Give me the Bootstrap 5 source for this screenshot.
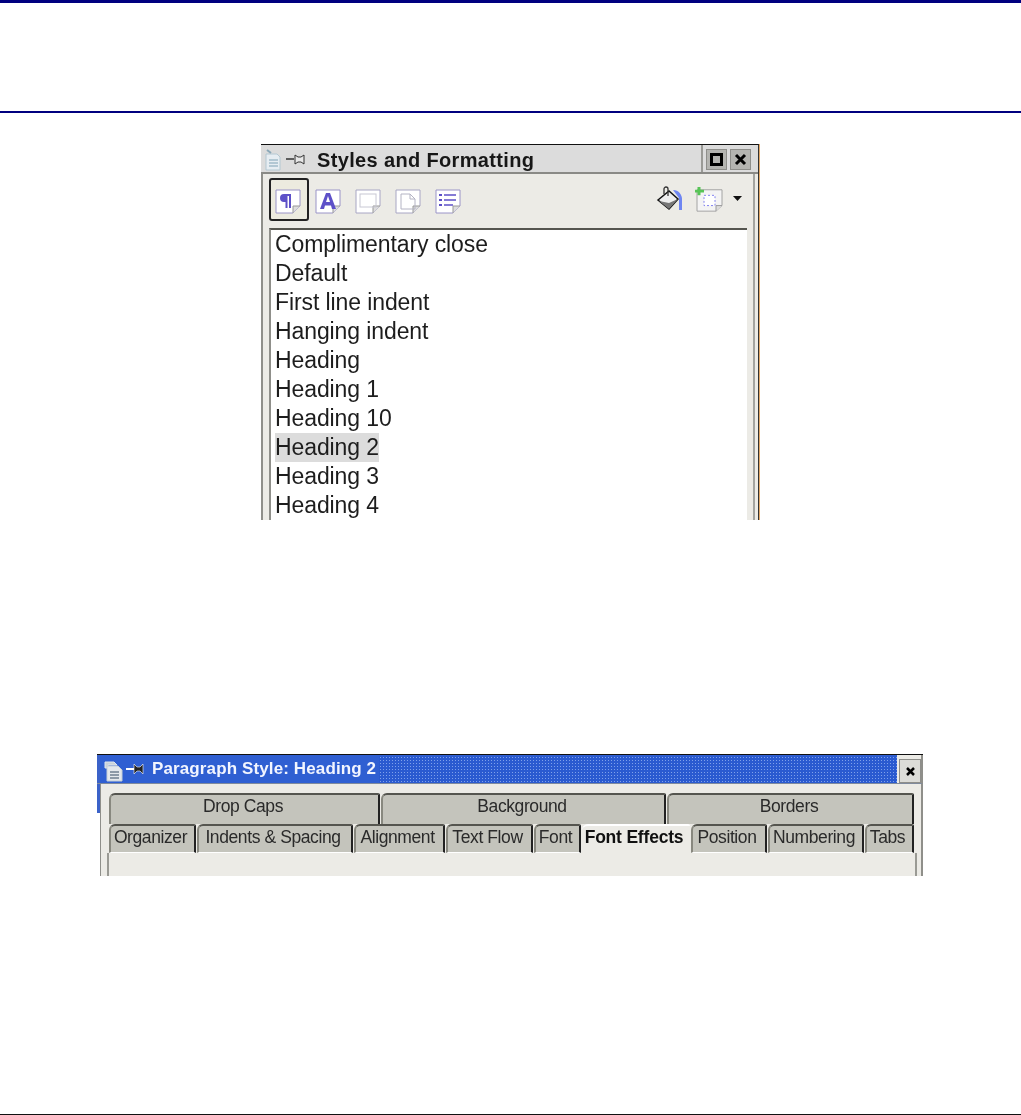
<!DOCTYPE html>
<html lang="en"><head><meta charset="utf-8"><title>Styles</title>
<link href="https://cdn.jsdelivr.net/npm/bootstrap@5.3.0/dist/css/bootstrap.min.css" rel="stylesheet">
<style>
html,body{margin:0;background:#fff;font-family:"Liberation Sans",Arial,sans-serif}
.pg{height:1115px;overflow:hidden}
.rule-a{height:3px;background:#00007f}
.rule-b{height:2px;background:#00007f;margin-top:108px}
.rule-z{height:1px;background:#111;margin-top:auto}
.shot{filter:blur(.45px)}
.win1{width:498px;height:376px;margin:31px 0 0 261px;border-top:1px solid #111;border-right:1px solid #333;box-shadow:1px 0 0 #e2a868;overflow:hidden;background:#ecebe6}
.t1{height:29px;background:#dcdcdc;border-bottom:2px solid #8a8a86;padding-left:3px}
.t1 .ttl{font-weight:700;font-size:20px;letter-spacing:.35px;color:#171717;margin-left:12px;line-height:31px}
.btns{margin-left:auto;border-left:2px solid #9a9a96;height:27px;padding:4px 7px 0 3px;gap:3px}
.wb{width:21px;height:21px;background:#b4b4b0;border:1px solid #8e8e8a;color:#000;align-items:center;justify-content:center}
.body1{border-left:2px solid #8f8f8a;border-right:2px solid #a4a4a0;margin-right:3px;height:346px}
.tool{height:54px;padding:4px 0 0 6px}
.tbb{width:40px;height:43px;border-radius:3px;align-items:center;justify-content:center}
.tbb.on{border:2px solid #222;background:#ecebdf}
.tbb svg{display:block;margin:4px 2px 0 0}
.tright{margin-left:auto;align-items:flex-start}
.ic-a{margin:8px 10px 0 0}
.ic-b{margin:9px 9px 0 0}
.ic-c{margin:18px 11px 0 0}
.listb{margin:0 6px 0 6px;height:292px;background:#fff;border-top:2px solid #55554f;border-left:2px solid #8f8f8a;padding:0 0 0 4px;overflow:hidden}
.it{font-size:23px;letter-spacing:-.1px;line-height:29px;height:29px;color:#1d1d1d;white-space:nowrap}
.it .sel{display:inline-block;background:#dcdcdc}
.win2{width:826px;height:122px;margin:234px 0 0 97px;border-top:1px solid #111;overflow:hidden;background:linear-gradient(#3b62c9 58px,#fff 58px)}
.t2{height:29px;background:#ecebe6;color:#f2f5ff;align-items:stretch;border-bottom:1px solid #7f8a9c;border-right:2px solid #8f8f8a}
.bluebar{flex:1;background:#2f5fd2;border-left:3px solid #3b62c9;padding-left:3px;align-items:center}
.bluebar .doc{margin-top:5px}
.bluebar .pin{margin-left:3px}
.t2 .ttl{font-weight:700;font-size:17px;letter-spacing:.12px;margin-left:8px;padding-right:3px}
.dots{flex:1;height:27px;background-color:#2a5ad0;background-image:radial-gradient(#7fa0ea .7px,transparent .9px);background-size:3px 3px}
.xb{width:22px;height:24px;margin:4px 0 0 2px;background:#dcdcd8;border:1px solid #8e8e8a;display:flex;align-items:center;justify-content:center}
.rows{margin-left:3px;height:92px;background:#ecebe6;border-left:1px solid #8f8f8a;border-right:2px solid #8f8f8a;padding:9px 0 0 8px}
.tabr{height:31px}
.tb{flex:none;background:#c4c4bc;border-top:2px solid #55554f;border-left:2px solid #88887f;border-right:2px solid #222;border-top-left-radius:6px;border-top-right-radius:2px;color:#2a2a2a;font-size:17.5px;letter-spacing:-.4px;text-align:center;line-height:22px;padding-right:3px;white-space:nowrap;overflow:hidden;margin-right:1px}
.r2{height:29px}
.r2 .tb{line-height:23px;padding-right:4px;border-bottom:1px solid #fff}
.r2 .tb.act{background:#ecebe6;font-weight:700;letter-spacing:-.2px;color:#111;border:0;border-top:2px solid #fff;padding-right:4px}
.w1{width:271px}.w2{width:285px}.w3{width:247px}
.a1{width:87px}.a2{width:156px}.a3{width:91px}.a4{width:87px}.a5{width:47px}.a6{width:108px}.a7{width:76px}.a8{width:96px}.a9{width:49px}
.panel{margin-left:-2px;width:810px;height:40px;border-left:2px solid #9a9a94;border-right:2px solid #9a9a94}
</style></head>
<body>
<div class="pg d-flex flex-column">
<div class="rule-a"></div><div class="rule-b"></div>

<div class="win1 shot flex-shrink-0">
 <div class="t1 d-flex">
  <svg width="18" height="22" viewBox="0 0 18 22" class="mt-1"><path d="M2 5h11l3 3v13H2z" fill="#e6edf2" stroke="#b4c8d2"/><path d="M5 11h9M5 14h9M5 17h9" stroke="#7fa2b5"/><path d="M3 1l4 3" stroke="#8aa8b8" stroke-width="2"/></svg>
  <svg width="19" height="14" viewBox="0 0 19 14" class="mt-2 ms-1"><path d="M0 6h8" stroke="#333" stroke-width="1.5"/><path d="M9 2l3 2h3l3-2v9l-3-2h-3l-3 2z" fill="#e8e8e8" stroke="#333"/></svg>
  <span class="ttl">Styles and Formatting</span>
  <div class="btns d-flex">
   <div class="wb d-flex"><svg width="13" height="13" viewBox="0 0 13 13"><rect x="1.5" y="1.5" width="10" height="10" fill="none" stroke="#000" stroke-width="3"/></svg></div>
   <div class="wb d-flex"><svg width="13" height="13" viewBox="0 0 13 13"><path d="M2 2l9 9M11 2l-9 9" stroke="#000" stroke-width="3"/></svg></div>
  </div>
 </div>
 <div class="body1">
  <div class="tool d-flex">
   <div class="tbb on d-flex"><svg width="26" height="25" viewBox="0 0 26 25"><path d="M1 1h24v16l-7 7H1z" fill="#fff" stroke="#9a94c8"/><path d="M18 24v-7h7" fill="#ddd" stroke="#999"/><path d="M14 5H9a3.500 3.500 0 0 0 0 8h1.500v6h2V7h1.500v12h2V5z" fill="#5d50c8"/></svg></div>
   <div class="tbb d-flex"><svg width="26" height="25" viewBox="0 0 26 25"><path d="M1 1h24v16l-7 7H1z" fill="#fff" stroke="#9a94c8"/><path d="M18 24v-7h7" fill="#ddd" stroke="#999"/><path d="M5 20L11 4h4l6 16h-4l-1-3.500h-6L9 20zM11 13h4l-2-6z" fill="#5d50c8"/></svg></div>
   <div class="tbb d-flex"><svg width="26" height="25" viewBox="0 0 26 25"><path d="M1 1h24v16l-7 7H1z" fill="#fff" stroke="#a8a6c4"/><path d="M18 24v-7h7" fill="#ddd" stroke="#999"/><rect x="5" y="5" width="16" height="13" fill="none" stroke="#c8c8d4"/></svg></div>
   <div class="tbb d-flex"><svg width="26" height="25" viewBox="0 0 26 25"><path d="M1 1h24v16l-7 7H1z" fill="#fff" stroke="#a8a6c4"/><path d="M18 24v-7h7" fill="#ddd" stroke="#999"/><path d="M6 5h9l5 5v10H6zM15 5v5h5" fill="none" stroke="#b4b4c4"/></svg></div>
   <div class="tbb d-flex"><svg width="26" height="25" viewBox="0 0 26 25"><path d="M1 1h24v16l-7 7H1z" fill="#fff" stroke="#9a94c8"/><path d="M18 24v-7h7" fill="#ddd" stroke="#999"/><path d="M9 6h12M9 11h12M9 16h9" stroke="#5d50c8" stroke-width="1.500"/><path d="M4 5h3v2H4zM4 10h3v2H4zM4 15h3v2H4z" fill="#5d50c8"/></svg></div>
   <div class="tright d-flex">
    <svg class="ic-a" width="28" height="28" viewBox="0 0 28 28"><path d="M2 14l11-9 9 8-9 10z" fill="#eee" stroke="#111" stroke-width="1.500"/><path d="M8 8V3a2 2 0 0 1 4 0v7" fill="none" stroke="#333" stroke-width="1.300"/><path d="M3 15l10 8 9-10-9 4z" fill="#777"/><path d="M17 4c6 0 9 5 9 9v11h-3V12l-6-8z" fill="#6f86f2"/></svg>
    <svg class="ic-b" width="30" height="26" viewBox="0 0 30 28" preserveAspectRatio="none"><path d="M3 3h25v17l-6 6H3z" fill="#f4f4f4" stroke="#a0a0a0"/><path d="M22 26v-6h6" fill="#ddd" stroke="#999"/><rect x="10" y="9" width="11" height="11" fill="#fff" stroke="#7f7fee" stroke-dasharray="2 2"/><path d="M5 0v9M1 4.500h9" stroke="#57c456" stroke-width="3"/></svg>
    <svg class="ic-c" width="9" height="5" viewBox="0 0 9 5"><path d="M0 0h9L4.500 5z" fill="#111"/></svg>
   </div>
  </div>
  <div class="listb">
   <div class="it">Complimentary close</div><div class="it">Default</div><div class="it">First line indent</div><div class="it">Hanging indent</div><div class="it">Heading</div><div class="it">Heading 1</div><div class="it">Heading 10</div><div class="it"><span class="sel">Heading 2</span></div><div class="it">Heading 3</div><div class="it">Heading 4</div>
  </div>
 </div>
</div>

<div class="win2 shot flex-shrink-0">
 <div class="t2 d-flex">
  <div class="bluebar d-flex">
   <svg class="doc" width="20" height="21" viewBox="0 0 20 21"><path d="M2 1h9l3 3H5v3H2z" fill="#c9d2da" stroke="#dfe6ec"/><path d="M4 5h11l4 4v11H4z" fill="#e4e8ec" stroke="#c4ced6"/><path d="M7 11h9M7 14h9M7 17h9" stroke="#6f7f90" stroke-width="1.300"/></svg>
   <svg class="pin" width="18" height="12" viewBox="0 0 18 12"><path d="M0 6h8" stroke="#fff" stroke-width="2"/><path d="M8 1l3 3h3l3-3v10l-3-3h-3l-3 3z" fill="#222" stroke="#fff" stroke-width=".6"/></svg>
   <span class="ttl">Paragraph Style: Heading 2</span>
   <div class="dots"></div>
  </div>
  <div class="xb"><svg width="11" height="11" viewBox="0 0 11 11"><path d="M2 2l7 7M9 2l-7 7" stroke="#000" stroke-width="2.500"/></svg></div>
 </div>
 <div class="rows">
  <div class="tabr d-flex"><div class="tb w1">Drop Caps</div><div class="tb w2">Background</div><div class="tb w3">Borders</div></div>
  <div class="tabr r2 d-flex"><div class="tb a1">Organizer</div><div class="tb a2">Indents &amp; Spacing</div><div class="tb a3">Alignment</div><div class="tb a4">Text Flow</div><div class="tb a5">Font</div><div class="tb a6 act">Font Effects</div><div class="tb a7">Position</div><div class="tb a8">Numbering</div><div class="tb a9">Tabs</div></div>
  <div class="panel"></div>
 </div>
</div>

<div class="rule-z"></div>
</div>
<script src="https://cdn.jsdelivr.net/npm/bootstrap@5.3.0/dist/js/bootstrap.bundle.min.js"></script>
</body></html>
